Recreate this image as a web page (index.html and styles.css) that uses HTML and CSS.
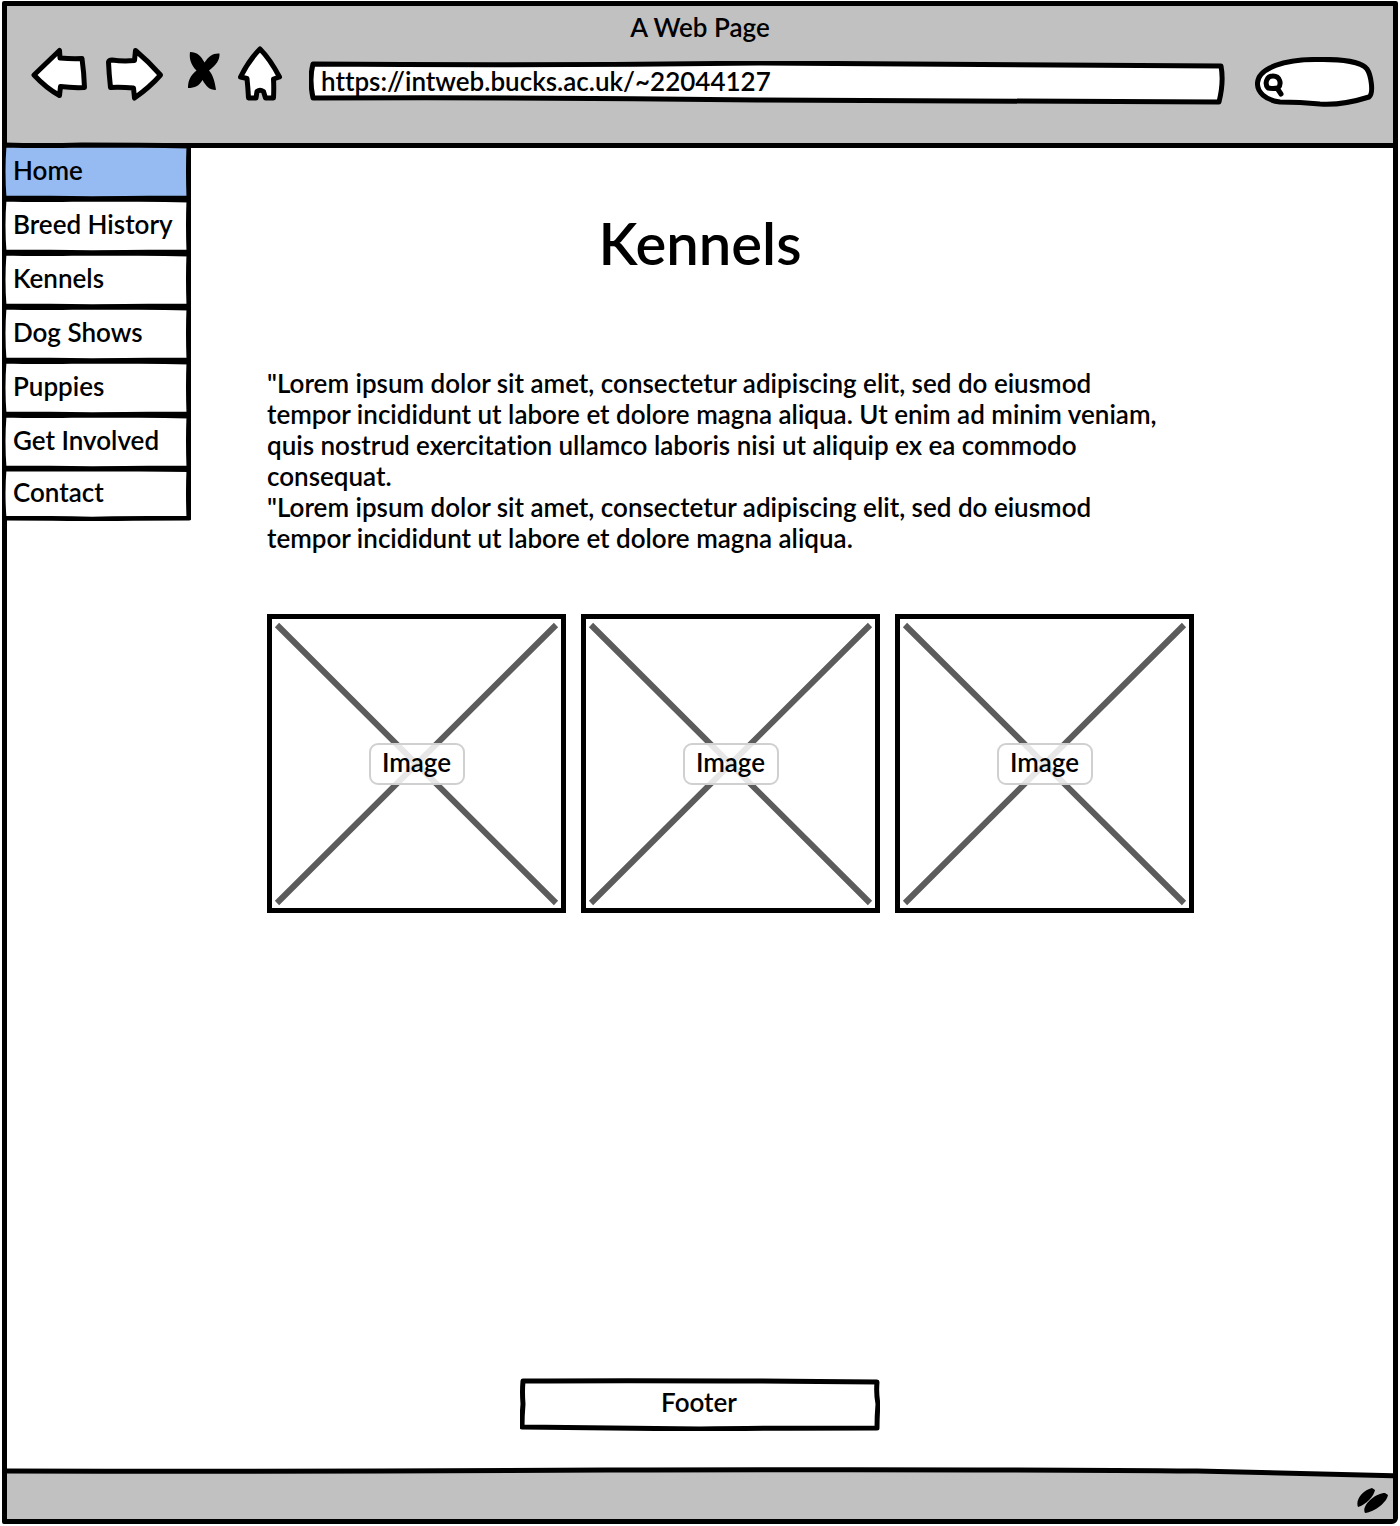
FILE: index.html
```html
<!DOCTYPE html>
<html lang="en">
<head>
  <meta charset="utf-8">
  <meta name="viewport" content="width=device-width, initial-scale=1">
  <title>Kennels</title>
  <link rel="stylesheet" href="styles.css">
</head>
<body>
  <div class="window">
    <header class="chrome">
      <div class="chrome-title">A Web Page</div>
      <div class="toolbar">
        <div class="buttons">
          <button class="tool" type="button" aria-label="Back">
            <svg width="58" height="58" viewBox="31 46 58 58" class="outline"><path d="M34 75 L59.500 50.500 L60 58 Q72 59 82 58.500 Q84 73 84.500 87.500 Q72 88 60.500 86.500 L59.500 95.500 Q46 88 34 75Z"/></svg>
          </button>
          <button class="tool" type="button" aria-label="Forward">
            <svg width="60" height="58" viewBox="105 46 60 58" class="outline"><path d="M135.500 50.500 Q148 61 160.500 75 Q150 87 134.500 98 L133.500 88 Q121 87 110.500 87.500 Q109 74 108.500 62 Q109 60 112 60 Q123 61.500 134.500 60.500Z"/></svg>
          </button>
          <button class="tool" type="button" aria-label="Stop">
            <svg width="40" height="58" viewBox="181 46 40 58"><path d="M190 52 C197 52 201 56 204.500 62.500 C209 56 213 53 219.500 53.500 C220 60 216 65 209 70.500 C213 75 215 82 216 90 C209 90 206 86 202.500 80 C199 86 195 88 188 88 C188 81 190 76 196.500 70.500 C191 65 189 59 190 52Z"/></svg>
          </button>
          <button class="tool" type="button" aria-label="Home">
            <svg width="48" height="58" viewBox="237 46 48 58" class="outline"><path d="M260 49 Q270 59 279.500 77 L273.500 79 Q274 88 273.500 98 L265.500 98 L263.500 91.500 Q260 89 257 91.500 L256 98 L248.500 98 Q248 88 247 78.500 L240.500 77 Q249 60 260 49Z"/></svg>
          </button>
        </div>
        <input class="address" type="text" aria-label="Address" value="https://intweb.bucks.ac.uk/~22044127">
        <label class="search">
          <svg width="22" height="26" viewBox="1262 72 22 26" class="lens" aria-hidden="true"><path d="M1268 88 C1264 83 1267 76 1273 76 C1280 76 1282 84 1278 88 Q1273 89 1268 88Z M1277 88 L1281 94"/></svg>
          <input class="search-input" type="text" aria-label="Search">
        </label>
      </div>
    </header>

    <div class="page">
      <nav class="menu" aria-label="Main">
        <a class="menu-item current" href="#home">Home</a>
        <a class="menu-item" href="#breed-history">Breed History</a>
        <a class="menu-item" href="#kennels">Kennels</a>
        <a class="menu-item" href="#dog-shows">Dog Shows</a>
        <a class="menu-item" href="#puppies">Puppies</a>
        <a class="menu-item" href="#get-involved">Get Involved</a>
        <a class="menu-item last" href="#contact">Contact</a>
      </nav>
      <h1 class="heading">Kennels</h1>
      <main class="content">
        <p class="copy">"Lorem ipsum dolor sit amet, consectetur adipiscing elit, sed do eiusmod<br>
          tempor incididunt ut labore et dolore magna aliqua. Ut enim ad minim veniam,<br>
          quis nostrud exercitation ullamco laboris nisi ut aliquip ex ea commodo<br>
          consequat.</p>
        <p class="copy">"Lorem ipsum dolor sit amet, consectetur adipiscing elit, sed do eiusmod<br>
          tempor incididunt ut labore et dolore magna aliqua.</p>
        <div class="gallery">
          <div class="picture"><span class="picture-label">Image</span></div>
          <div class="picture"><span class="picture-label">Image</span></div>
          <div class="picture"><span class="picture-label">Image</span></div>
        </div>
      </main>
      <footer class="site-footer">Footer</footer>
    </div>

    <div class="status-bar">
      <svg width="34" height="28" viewBox="1356 1486 34 28" aria-hidden="true"><path d="M1358 1507 C1355 1500 1363 1490 1372 1488 L1375 1490 C1374 1496 1366 1505 1358 1507Z M1365 1513 C1361 1506 1375 1493 1385 1493 L1388 1495 C1387 1502 1375 1512 1365 1513Z"/></svg>
    </div>
  </div>
</body>
</html>
```

FILE: styles.css
```css
*, *::before, *::after { box-sizing: border-box; }

body {
  margin: 0;
  padding: 1px 2px 2px;
  background: #fff;
  color: #000;
  font: 600 26px/31px Lato, "Open Sans", sans-serif;
  font-variant-ligatures: none;
}

.window {
  display: flex;
  flex-direction: column;
  min-height: calc(100vh - 3px);
  border: 5px solid #000;
  border-radius: 2px 2px 6px 2px;
  background: #fff;
}

/* Browser chrome */
.chrome {
  padding: 6px 18px 36px 24px;
  border-bottom: 5px solid #000;
  background: #c1c1c1;
}

.chrome-title {
  text-align: center;
  padding-right: 6px;
}

.toolbar {
  display: flex;
  align-items: flex-start;
  gap: 24px;
  padding-top: 3px;
}

.buttons { display: flex; gap: 16px; }

.tool {
  padding: 0;
  border: 0;
  background: none;
}

.tool svg { display: block; }

.outline {
  fill: #fff;
  stroke: #000;
  stroke-width: 5px;
  stroke-linejoin: round;
}

.address {
  flex: 1;
  min-width: 0;
  height: 44px;
  margin-top: 15px;
  padding: 0 12px 5px;
  border: 0;
  background: url("data:image/svg+xml,%3Csvg xmlns='http://www.w3.org/2000/svg' viewBox='0 0 918 44' preserveAspectRatio='none'%3E%3Cpath d='M4 3 Q230 5 450 2 Q700 3 914 5 Q917 21 912 41 Q700 41 450 39 Q230 36 4 37 Q0 18 4 3Z' fill='white' stroke='black' stroke-width='5' stroke-linejoin='round'/%3E%3C/svg%3E") 0 0 / 100% 100% no-repeat;
  color: inherit;
  font: inherit;
}

.search {
  display: flex;
  width: 120px;
  height: 50px;
  margin: 11px 0 0 6px;
  padding: 15px 12px 9px 7px;
  background: url("data:image/svg+xml,%3Csvg xmlns='http://www.w3.org/2000/svg' viewBox='1255 57 120 50'%3E%3Cpath d='M1280 102 C1265 100 1257 92 1257.500 83 C1258 68 1285 59 1318 59.500 C1342 59 1362 62 1367 69 C1371 75 1374 93 1369 97 C1350 103 1335 105 1320 104 Q1300 102 1280 102Z' fill='white' stroke='black' stroke-width='5' stroke-linejoin='round'/%3E%3C/svg%3E") 0 0 / 100% 100% no-repeat;
}

.lens {
  flex: none;
  fill: none;
  stroke: #000;
  stroke-width: 5px;
  stroke-linecap: round;
  stroke-linejoin: round;
}

.search-input {
  flex: 1;
  min-width: 0;
  padding: 0;
  border: 0;
  background: none;
  font: inherit;
}

/* Page */
.page {
  flex: 1;
  display: grid;
  grid-template-columns: 184px 1fr;
  grid-template-rows: auto 1fr auto;
  padding-bottom: 36px;
}

.menu {
  grid-column: 1;
  grid-row: 1 / span 2;
  margin: -6px 0 0 -5px;
  z-index: 1;
}

.menu-item {
  display: flex;
  align-items: center;
  height: 59px;
  padding: 0 0 3px 11px;
  background: url("data:image/svg+xml,%3Csvg xmlns='http://www.w3.org/2000/svg' viewBox='0 0 189 59' preserveAspectRatio='none'%3E%3Cpath d='M2 3 Q40 4 80 3 Q140 3 187 4 Q186 28 187 56 Q130 56 90 57 Q50 56 2 56 Q0 30 2 3Z' fill='white' stroke='black' stroke-width='5' stroke-linejoin='round'/%3E%3C/svg%3E") 0 0 / 100% 100% no-repeat;
  color: inherit;
  text-decoration: none;
  white-space: nowrap;
}

.menu-item + .menu-item { margin-top: -5px; }

.menu-item.current {
  background-image: url("data:image/svg+xml,%3Csvg xmlns='http://www.w3.org/2000/svg' viewBox='0 0 189 59' preserveAspectRatio='none'%3E%3Cpath d='M2 3 Q40 4 80 3 Q140 3 187 4 Q186 28 187 56 Q130 56 90 57 Q50 56 2 56 Q0 30 2 3Z' fill='%2395bbf2' stroke='black' stroke-width='5' stroke-linejoin='round'/%3E%3C/svg%3E");
}

.menu-item.last { height: 55px; }

.heading {
  grid-column: 1 / -1;
  grid-row: 1;
  margin: 62px 0 92px;
  text-align: center;
  font-size: 58px;
  font-weight: 600;
  line-height: 66px;
}

.content {
  grid-column: 2;
  grid-row: 2;
  margin: 0 199px 0 76px;
}

.copy {
  margin: 0;
  white-space: nowrap;
}

.gallery {
  display: grid;
  grid-template-columns: repeat(3, 1fr);
  gap: 15px;
  margin-top: 60px;
}

.picture {
  display: flex;
  align-items: center;
  justify-content: center;
  aspect-ratio: 1;
  border: 5px solid #000;
  background: url("data:image/svg+xml,%3Csvg xmlns='http://www.w3.org/2000/svg' viewBox='5 5 289 289'%3E%3Cpath d='M10 11 L289 289 M289 11 L10 289' fill='none' stroke='%235c5c5c' stroke-width='6'/%3E%3C/svg%3E") 0 0 / 100% 100% no-repeat;
}

.picture-label {
  min-width: 96px;
  padding: 2px 8px 5px;
  border: 2px solid #d0d0d0;
  border-radius: 9px;
  background: rgba(255, 255, 255, 0.85);
  text-align: center;
}

.site-footer {
  grid-column: 1 / -1;
  grid-row: 3;
  justify-self: center;
  width: 360px;
  padding: 9px 2px 13px 0;
  background: url("data:image/svg+xml,%3Csvg xmlns='http://www.w3.org/2000/svg' viewBox='0 0 360 53' preserveAspectRatio='none'%3E%3Cpath d='M3 3 Q150 2 357 4 Q356 16 358 26 Q357 38 357 50 Q250 50 180 51 Q80 50 2 49 Q2 38 3 26 Q2 14 3 3Z' fill='white' stroke='black' stroke-width='5' stroke-linejoin='round'/%3E%3C/svg%3E") 0 0 / 100% 100% no-repeat;
  text-align: center;
}

.status-bar {
  display: flex;
  justify-content: flex-end;
  padding: 19px 3px 5px 0;
  background: url("data:image/svg+xml,%3Csvg xmlns='http://www.w3.org/2000/svg' viewBox='0 0 1386 52' preserveAspectRatio='none'%3E%3Cpath d='M-6 4 Q300 5 600 3 Q1000 2 1190 4 L1392 9 V60 H-6Z' fill='%23c1c1c1' stroke='black' stroke-width='5'/%3E%3C/svg%3E") 0 0 / 100% 100% no-repeat;
}
```
